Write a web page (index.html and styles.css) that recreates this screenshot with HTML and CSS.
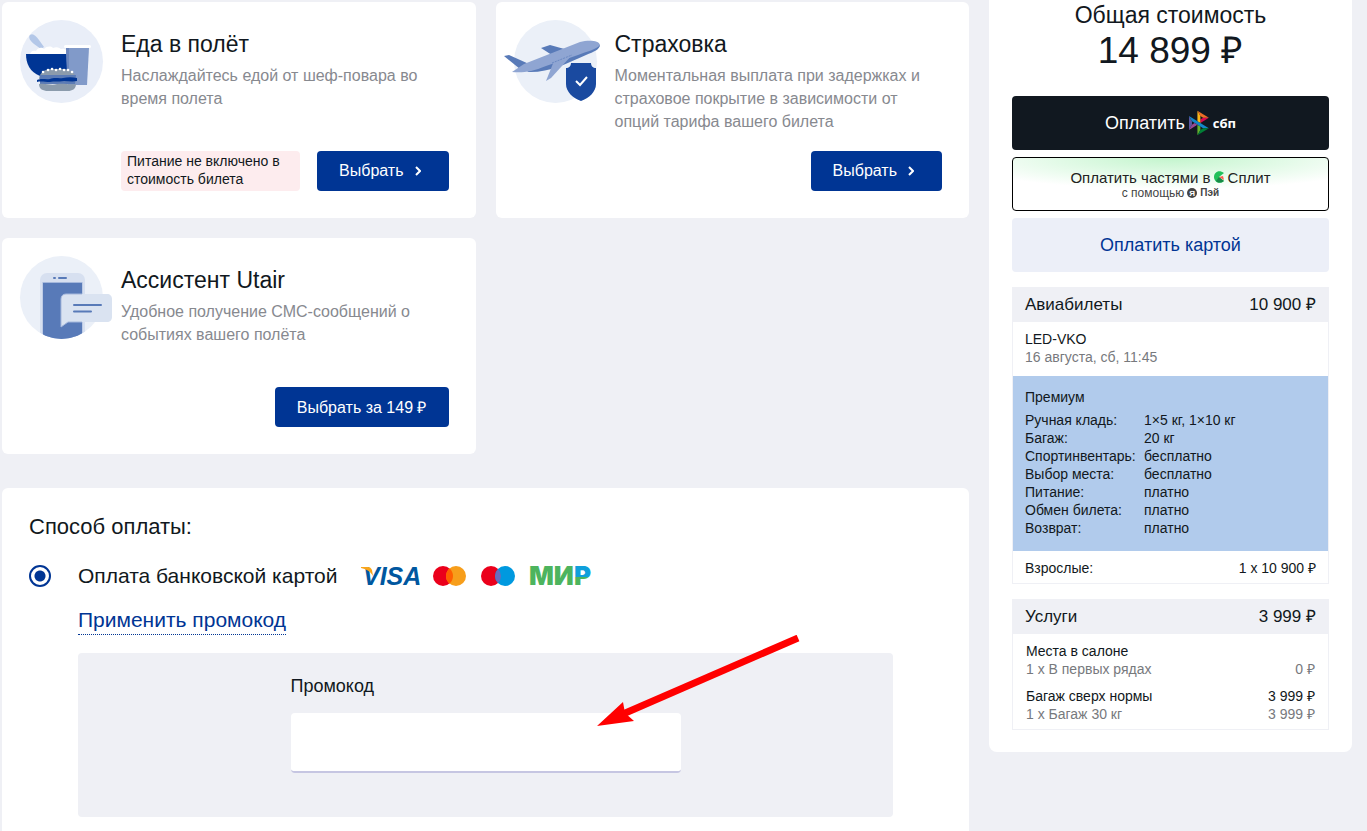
FILE: index.html
```html
<!DOCTYPE html>
<html lang="ru">
<head>
<meta charset="UTF-8" />
<meta name="viewport" content="width=device-width, initial-scale=1" />
<title>Utair - Оплата заказа</title>
<link rel="stylesheet" href="styles.css">
</head>
<body>

<main class="content">
  <div class="services">

    <section class="card">
      <svg class="card-icon" viewBox="0 0 83 83" aria-hidden="true">
        <circle cx="41.500" cy="41.500" r="41.500" fill="#e9eef8"/>
        <path d="M10 15c3-2 6 1 9 5l5 7-3 2-7-5c-4-3-6-7-4-9z" fill="#b3c7e8"/>
        <path d="M10 35c0-4 4-5 6-4 2-4 6-4 8-2 3-3 7-3 9-1 4-2 7 0 8 1 4-1 7 2 7 6z" fill="#fff"/>
        <path d="M6 34h42v22H20C10 52 6 44 6 34z" fill="#003594"/>
        <rect x="44" y="25" width="27" height="3" rx="1.500" fill="#fff"/>
        <path d="M46 28h23l-2 37H48z" fill="#819ac9"/>
        <path d="M46 28h3v28h-2z" fill="#6b86bd"/>
        <path d="M19 59c0-6 6-10 12-10h12c7 0 13 4 13 10z" fill="#8b9bac"/>
        <path d="M20 55h36l-1 9H20z" fill="#5b7bb5"/>
        <path d="M17 60c5-2 9 0 13-1 5-2 9 0 13-1 5-1 9-1 14 0v3c-5 1-9 0-13 0-6 1-10 0-14 1-5 0-9-1-13 0z" fill="#003594"/>
        <path d="M19 64c8-1 12 2 18 0 7-1 12 1 19 0 0 5-4 7-8 7H28c-5 0-9-2-9-7z" fill="#8b9bac"/>
        <path d="M23 52h.1M28 50h.1M32 49h.1M36 50h.1M40 49h.1M44 50h.1M48 50h.1M52 52h.1" stroke="#fff" stroke-width="2.500" stroke-linecap="round"/>
      </svg>
      <div class="card-body">
        <h2>Еда в полёт</h2>
        <p>Наслаждайтесь едой от шеф-повара во время полета</p>
        <div class="card-actions">
          <span class="note">Питание не включено в стоимость билета</span>
          <button class="btn" type="button">Выбрать
            <svg class="chevron" viewBox="0 0 6 10" aria-hidden="true"><path d="M1 1l4 4-4 4"/></svg>
          </button>
        </div>
      </div>
    </section>

    <section class="card">
      <svg class="card-icon" viewBox="0 0 83 83" aria-hidden="true">
        <circle cx="41.500" cy="41.500" r="41.500" fill="#ebf0f8"/>
        <path d="M27 28l9-3 18 5-13 7z" fill="#587ab8"/>
        <path d="M-10 36l5-1 20 9-9 5z" fill="#587ab8"/>
        <path d="M13 52c22 1 38-8 59-17 8-3 14-6 14-10L40 34z" fill="#587ab8"/>
        <path d="M-2 52L10 44 66 22c8-2 19-2 20 3-4 5-13 6-22 10L32 46C18 52 8 53-2 52z" fill="#8fa5d2"/>
        <path d="M58 35L37 58l-5 3 8-20z" fill="#8fa5d2"/>
        <path d="M38 43l20-8" stroke="#6b89c2" stroke-width="1" stroke-dasharray="2 1"/>
        <path d="M57 43h20c0 3 2 5 5 5v16c0 8-7 14-15 17-8-3-15-9-15-17V48c3 0 5-2 5-5z" fill="#1a4aa0"/>
        <path d="M62 61l4 4 7-8" fill="none" stroke="#fff" stroke-width="2"/>
      </svg>
      <div class="card-body">
        <h2>Страховка</h2>
        <p>Моментальная выплата при задержках и страховое покрытие в зависимости от опций тарифа вашего билета</p>
        <div class="card-actions">
          <button class="btn" type="button">Выбрать
            <svg class="chevron" viewBox="0 0 6 10" aria-hidden="true"><path d="M1 1l4 4-4 4"/></svg>
          </button>
        </div>
      </div>
    </section>

    <section class="card">
      <svg class="card-icon" viewBox="0 0 83 83" aria-hidden="true">
        <defs><clipPath id="round"><circle cx="41.500" cy="41.500" r="41.500"/></clipPath></defs>
        <circle cx="41.500" cy="41.500" r="41.500" fill="#ebf0f8"/>
        <g clip-path="url(#round)">
          <rect x="20" y="17" width="45" height="80" rx="7" fill="#d7e0f0"/>
          <rect x="22.500" y="26" width="40" height="60" fill="#a5b8dc"/>
          <rect x="23" y="27" width="39" height="60" fill="#587ab8"/>
          <path d="M34 22h1M39 22h7" stroke="#587ab8" stroke-width="2" stroke-linecap="round"/>
        </g>
        <path d="M41 71V43c0-3 2-5 5-5h41c3 0 5 2 5 5v18c0 3-2 5-5 5H48z" fill="#dae3f1"/>
        <path d="M41 71V43c0-3 2-5 5-5h16M62 66H48l-7 5" fill="none" stroke="#a5b8dc"/>
        <path d="M54 49h27M54 55.500h17" stroke="#587ab8" stroke-width="2" stroke-linecap="round"/>
      </svg>
      <div class="card-body">
        <h2>Ассистент Utair</h2>
        <p>Удобное получение СМС-сообщений о событиях вашего полёта</p>
        <div class="card-actions">
          <button class="btn" type="button">Выбрать за 149 ₽</button>
        </div>
      </div>
    </section>

  </div>

  <section class="payment">
    <h2>Способ оплаты:</h2>
    <div class="method">
      <input type="radio" name="method" id="method-card" checked>
      <label for="method-card">Оплата банковской картой</label>
      <svg class="pay-logos" viewBox="0 -4 242 30" role="img" aria-label="Visa, Mastercard, Maestro, Мир">
        <defs>
          <linearGradient id="mir" x1="0" y1="0" x2="0" y2="1">
            <stop offset="0.550" stop-color="#0f9fdb"/>
            <stop offset="0.550" stop-color="#4db45e"/>
          </linearGradient>
        </defs>
        <text class="visa" x="2" y="20">VISA</text>
        <path d="M0 2h7c2 0 3 1 4 3l1 6C9 6 5 4 0 3z" fill="#f9a51a"/>
        <circle cx="82" cy="11" r="10" fill="#eb001b"/>
        <circle cx="95" cy="11" r="10" fill="#f79e1b"/>
        <path d="M88.500 3.400a10 10 0 0 1 0 15.200a10 10 0 0 1 0-15.200z" fill="#ff5f00"/>
        <circle cx="130" cy="11" r="10" fill="#eb001b"/>
        <circle cx="144" cy="11" r="10" fill="#0099df"/>
        <path d="M137 3.900a10 10 0 0 1 0 14.200a10 10 0 0 1 0-14.200z" fill="#6c6bbd"/>
        <text class="mir" x="168" y="20">МИ<tspan fill="url(#mir)">Р</tspan></text>
      </svg>
    </div>
    <a class="promo-link" href="#promo">Применить промокод</a>
    <div class="promo">
      <div class="promo-field">
        <label for="promo">Промокод</label>
        <input type="text" id="promo">
        <svg class="arrow" viewBox="0 0 204 92" aria-hidden="true">
          <path d="M201 3L26 79" stroke="#f00" stroke-width="7"/>
          <path d="M0 91l26-24 2 11 9 8z" fill="#f00"/>
        </svg>
      </div>
    </div>
  </section>
</main>

<aside class="summary">
  <h2>Общая стоимость</h2>
  <div class="total">14 899 ₽</div>

  <div class="pay-buttons">
    <button class="pay pay-sbp" type="button">Оплатить
      <svg class="sbp" viewBox="0 0 98 120" aria-hidden="true">
        <path fill="#5b57a2" d="M0 26l14.500 26v16L0 94z"/>
        <path fill="#d90751" d="M55.800 42.600l13.600-8.300h27.900L55.800 59.700z"/>
        <path fill="#fab718" d="M55.700 26l.1 34.400-14.600-9V0z"/>
        <path fill="#ed6f26" d="M97.300 34.300H69.400L55.700 26 41.200 0z"/>
        <path fill="#63b22f" d="M55.800 94V77.300l-14.600-8.800V120z"/>
        <path fill="#1487c9" d="M69.400 85.700L14.500 52 0 26l97.200 59.700z"/>
        <path fill="#017f36" d="M41.200 120l14.600-26 13.600-8.300h27.800z"/>
        <path fill="#984995" d="M0 94l41.300-25.500L27.500 60l-13 8z"/>
      </svg>
      <span class="sbp-name">сбп</span>
    </button>
    <button class="pay pay-split" type="button">
      <span class="split-row">Оплатить частями в
        <svg class="split" viewBox="0 0 11 12" aria-hidden="true">
          <path d="M10 2C5-2 0 1 0 6s6 8 10 4L5 6z" fill="#22c05a"/>
          <path d="M10 10C7 12 4 12 2 10l3-4z" fill="#188a48"/>
          <path d="M5 6l4-1 1 4z" fill="#ff5a4d"/>
        </svg>
        Сплит</span>
      <span class="split-sub">с помощью
        <svg class="ya" viewBox="0 0 10 10" aria-hidden="true"><circle cx="5" cy="5" r="5" fill="#444"/><text x="5" y="8" text-anchor="middle">Я</text></svg>
        <b>Пэй</b></span>
    </button>
    <button class="pay pay-card" type="button">Оплатить картой</button>
  </div>

  <section class="box">
    <h3><span>Авиабилеты</span><span>10 900 ₽</span></h3>
    <div class="route">
      <div>LED-VKO</div>
      <div class="muted">16 августа, сб, 11:45</div>
    </div>
    <div class="tariff">
      <div class="tariff-name">Премиум</div>
      <table>
        <tr><th>Ручная кладь:</th><td>1×5 кг, 1×10 кг</td></tr>
        <tr><th>Багаж:</th><td>20 кг</td></tr>
        <tr><th>Спортинвентарь:</th><td>бесплатно</td></tr>
        <tr><th>Выбор места:</th><td>бесплатно</td></tr>
        <tr><th>Питание:</th><td>платно</td></tr>
        <tr><th>Обмен билета:</th><td>платно</td></tr>
        <tr><th>Возврат:</th><td>платно</td></tr>
      </table>
    </div>
    <div class="passengers row"><span>Взрослые:</span><span>1 x 10 900 ₽</span></div>
  </section>

  <section class="box">
    <h3><span>Услуги</span><span>3 999 ₽</span></h3>
    <div class="extras">
      <div class="extra">
        <div>Места в салоне</div>
        <div class="row muted"><span>1 x В первых рядах</span><span>0 ₽</span></div>
      </div>
      <div class="extra">
        <div class="row"><span>Багаж сверх нормы</span><span>3 999 ₽</span></div>
        <div class="row muted"><span>1 x Багаж 30 кг</span><span>3 999 ₽</span></div>
      </div>
    </div>
  </section>
</aside>

</body>
</html>
```
FILE: styles.css
```css
* {
  box-sizing: border-box;
}
body {
  margin: 0;
  padding: 0 15px 0 2px;
  min-height: 100vh;
  display: flex;
  gap: 20px;
  background: #eff0f5;
  color: #111820;
  font-family: "Liberation Sans", Arial, sans-serif;
}
h2, h3, p {
  margin: 0;
  font-weight: normal;
}
button, input {
  font-family: inherit;
}
button {
  cursor: pointer;
}

/* left column */
.content {
  flex: 1;
  min-width: 0;
  padding-top: 2px;
  display: flex;
  flex-direction: column;
  gap: 34px;
}
.services {
  display: grid;
  grid-template-columns: 1fr 1fr;
  grid-auto-rows: 1fr;
  gap: 20px;
}
.card {
  display: flex;
  gap: 18px;
  padding: 18px 27px 27px 18px;
  background: #fff;
  border-radius: 6px;
}
.card-icon {
  width: 83px;
  height: 83px;
  flex: none;
  overflow: visible;
}
.card-body {
  flex: 1;
  padding-top: 8px;
  display: flex;
  flex-direction: column;
}
.card h2 {
  font-size: 23px;
  line-height: 32px;
}
.card p {
  margin: 4px 0 18px;
  font-size: 16px;
  line-height: 23px;
  color: #87898f;
}
.card-actions {
  margin-top: auto;
  display: flex;
  justify-content: flex-end;
  gap: 17px;
}
.note {
  flex: 1;
  padding: 1px 6px 3px;
  border-radius: 4px;
  background: #fdecee;
  font-size: 14px;
  line-height: 18px;
}
.btn {
  height: 40px;
  padding: 0 22px;
  display: flex;
  align-items: center;
  gap: 11px;
  border: none;
  border-radius: 4px;
  background: #003594;
  color: #fff;
  font-size: 16px;
}
.chevron {
  width: 6px;
  height: 10px;
  margin-right: 6px;
  fill: none;
  stroke: #fff;
  stroke-width: 2;
}

/* payment */
.payment {
  flex: 1;
  padding: 24px 76px 14px;
  background: #fff;
  border-radius: 6px 6px 0 0;
}
.payment h2 {
  margin-left: -49px;
  font-size: 22px;
  line-height: 30px;
}
.method {
  margin: 19px 0 0 -49px;
  display: flex;
  align-items: center;
  font-size: 21px;
  line-height: 30px;
}
.method input {
  appearance: none;
  width: 22px;
  height: 22px;
  margin: 0 27px 0 0;
  border: 2px solid #003594;
  border-radius: 50%;
  background: radial-gradient(circle, #003594 5px, #fff 6px);
}
.pay-logos {
  width: 242px;
  height: 30px;
  margin-left: 24px;
}
.visa {
  font: italic bold 25px "Liberation Sans", Arial, sans-serif;
  fill: #00579f;
}
.mir {
  font: 900 26px Inter, Arial, sans-serif;
  fill: #4db45e;
}
.promo-link {
  display: inline-block;
  margin-top: 14px;
  border-bottom: 1px dotted #003594;
  color: #003594;
  font-size: 21px;
  line-height: 29px;
  text-decoration: none;
}
.promo {
  margin-top: 18px;
  padding: 20px 20px 44px;
  background: #eff0f5;
  border-radius: 4px;
}
.promo-field {
  position: relative;
  max-width: 390px;
  margin: 0 auto;
}
.promo-field label {
  display: block;
  margin-bottom: 13px;
  font-size: 18px;
  line-height: 27px;
}
.promo-field input {
  display: block;
  width: 100%;
  height: 60px;
  padding: 0 16px;
  border: none;
  border-bottom: 2px solid #c6c6e2;
  border-radius: 4px;
  background: #fff;
  font-size: 18px;
}
.arrow {
  position: absolute;
  top: -38px;
  left: 306px;
  width: 204px;
  height: 92px;
}

/* right column */
.summary {
  flex: none;
  align-self: flex-start;
  width: 363px;
  padding: 0 23px 22px;
  background: #fff;
  border-radius: 0 0 8px 8px;
  text-align: center;
}
.summary h2 {
  font-size: 23px;
  line-height: 30px;
}
.total {
  font-size: 37px;
  line-height: 42px;
}
.pay-buttons {
  margin: 24px 0 15px;
  display: flex;
  flex-direction: column;
  gap: 7px;
}
.pay {
  height: 54px;
  padding: 0;
  display: flex;
  align-items: center;
  justify-content: center;
  border: none;
  border-radius: 4px;
  font-size: 18px;
}
.pay-sbp {
  gap: 4px;
  background: #111820;
  color: #fff;
}
.sbp {
  width: 20px;
  height: 26px;
}
.sbp-name {
  font: bold 13px "Open Sans", sans-serif;
}
.pay-split {
  flex-direction: column;
  border: 1px solid #000;
  background: radial-gradient(ellipse 70% 60% at 50% 0, #c3f5cd, #fff);
  color: #222;
}
.split-row, .split-sub {
  display: flex;
  align-items: center;
  gap: 3px;
  font-size: 15px;
  line-height: 17px;
}
.split-sub {
  font-size: 12px;
  line-height: 14px;
  color: #444;
}
.split-sub b {
  font-size: 10px;
}
.split {
  width: 11px;
  height: 12px;
}
.ya {
  width: 10px;
  height: 10px;
}
.ya text {
  font: bold 8px "Liberation Sans", Arial, sans-serif;
  fill: #fff;
}
.pay-card {
  background: #eceff8;
  color: #003594;
}
.box {
  margin-bottom: 15px;
  border: 1px solid #eff0f5;
  font-size: 14px;
  line-height: 18px;
  text-align: left;
}
.box:last-child {
  margin-bottom: 0;
}
.box h3, .row {
  display: flex;
  justify-content: space-between;
}
.box h3 {
  padding: 0 12px;
  background: #eff0f5;
  font-size: 17px;
  line-height: 34px;
}
.muted {
  color: #77797d;
}
.route {
  padding: 8px 12px 10px;
}
.tariff {
  padding: 12px 12px 14px;
  background: #b1cbec;
}
.tariff-name {
  margin-bottom: 5px;
}
.tariff table {
  border-collapse: collapse;
}
.tariff th, .tariff td {
  padding: 0;
  font-weight: normal;
  text-align: left;
}
.tariff th {
  width: 119px;
}
.passengers {
  padding: 8px 12px 6px;
}
.extras {
  padding: 8px 13px 6px;
}
.extra + .extra {
  margin-top: 9px;
}
```
